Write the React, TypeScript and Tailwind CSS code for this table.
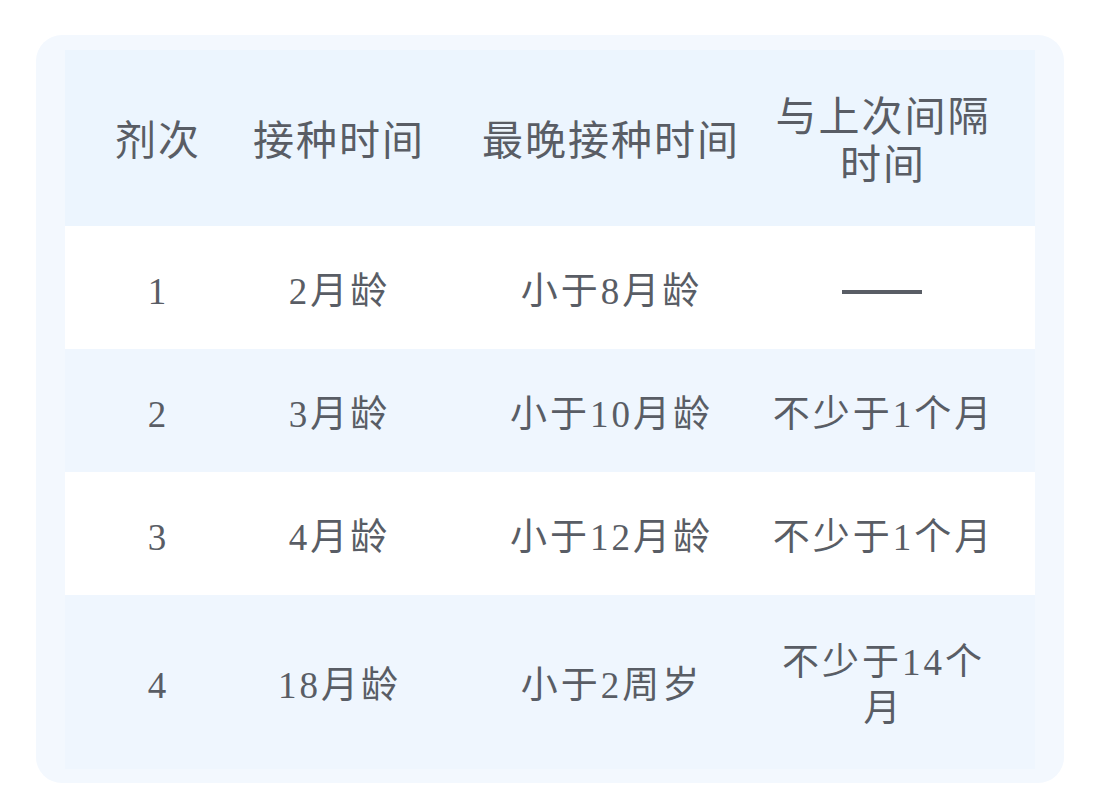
const header = ["剂次", "接种时间", "最晚接种时间", "与上次间隔时间"]

type Row = {
  dose: string
  start: string
  latest: string
  gap: string
}

const rows: Row[] = [
  { dose: "1", start: "2月龄", latest: "小于8月龄", gap: "——" },
  { dose: "2", start: "3月龄", latest: "小于10月龄", gap: "不少于1个月" },
  { dose: "3", start: "4月龄", latest: "小于12月龄", gap: "不少于1个月" },
  { dose: "4", start: "18月龄", latest: "小于2周岁", gap: "不少于14个月" },
]

const font = { fontFamily: '"Liberation Serif", "Noto Sans CJK SC", serif' }

export default function App() {
  return (
    <div className="w-[1099px] h-[812px] bg-white pt-[35px] pl-[36px]" style={font}>
      <div className="w-[1028px] h-[748px] rounded-[26px] bg-[#f3f8fe] px-[29px] py-[15px]">
        <div className="grid grid-cols-[184px_178px_340px_268px] text-[#595d65]">
          {/* 表头 */}
          {header.map((h, i) => (
            <div
              key={h}
              className={`h-[176px] bg-[#ecf5fe] flex items-center justify-center text-center text-[41px] leading-[48px] tracking-[2px] pt-[6px] ${
                i === 2 ? "pl-[26px]" : i === 3 ? "pr-[38px]" : ""
              }`}
            >
              <span className={i === 3 ? "block w-[230px] pl-[2px]" : "whitespace-nowrap pl-[2px]"}>{h}</span>
            </div>
          ))}

          {rows.map((r, idx) => {
            const bg = idx % 2 === 0 ? "bg-white" : "bg-[#eff6fe]"
            const h = idx === 3 ? "h-[174px]" : "h-[123px]"
            const cell = `${h} ${bg} flex items-center justify-center text-center text-[37px] leading-[46px] tracking-[3px] pt-[8px]`
            return [
              <div key={`${r.dose}-a`} className={cell}>
                <span className="pl-[3px]">{r.dose}</span>
              </div>,
              <div key={`${r.dose}-b`} className={cell}>
                <span className="whitespace-nowrap pl-[3px]">{r.start}</span>
              </div>,
              <div key={`${r.dose}-c`} className={`${cell} pl-[26px]`}>
                <span className="whitespace-nowrap pl-[3px]">{r.latest}</span>
              </div>,
              <div key={`${r.dose}-d`} className={`${cell} pr-[38px]`}>
                {r.gap === "——" ? (
                  <span className="block w-[80px] h-[4px] bg-[#595d65]" aria-label="——" />
                ) : (
                  <span className="block w-[230px] pl-[3px]">{r.gap}</span>
                )}
              </div>,
            ]
          })}
        </div>
      </div>
    </div>
  )
}
